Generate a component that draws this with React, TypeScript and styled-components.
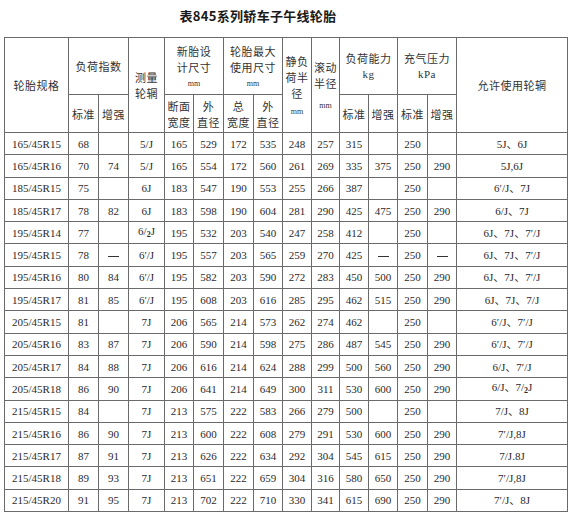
import React from 'react';
import styled, { createGlobalStyle } from 'styled-components';

const GlobalStyle = createGlobalStyle`
  html, body {
    margin: 0;
    padding: 0;
    background: #ffffff;
  }
`;

const Page = styled.div`
  width: 574px;
  height: 516px;
  overflow: hidden;
  background: #fff;
  font-family: "Liberation Serif", "Noto Sans CJK SC", serif;
  color: #2a2a2a;
`;

const Title = styled.div`
  height: 37px;
  box-sizing: border-box;
  padding: 0 58px 7px 0;
  display: flex;
  align-items: center;
  justify-content: center;
  font-family: "Noto Sans CJK SC", sans-serif;
  font-size: 13px;
  font-weight: 700;
  color: #1a1a1a;
  letter-spacing: 0.3px;
`;

const Table = styled.table`
  margin-left: 4px;
  width: 563px;
  border-collapse: collapse;
  table-layout: fixed;
  border: 1px solid #555;
`;

const HeadRow = styled.tr<{ $h: number }>`
  height: ${(p) => p.$h}px;
`;

const Th = styled.th`
  border: 1px solid #6a6a6a;
  padding: 0;
  font-family: "Noto Sans CJK SC", sans-serif;
  font-weight: 400;
  font-size: 11px;
  line-height: 16px;
  color: #333;
  text-align: center;
  vertical-align: middle;
  letter-spacing: 0.5px;
`;

const Unit = styled.span<{ $gap?: number }>`
  display: block;
  margin-top: ${(p) => p.$gap ?? 2}px;
  font-family: "Liberation Serif", serif;
  font-size: 8px;
  line-height: 10px;
  letter-spacing: 0;
`;

const UnitLatin = styled.span`
  display: block;
  font-family: "Liberation Serif", serif;
  font-size: 11px;
  line-height: 16px;
  letter-spacing: 0.5px;
`;

const Row = styled.tr`
  height: 22.3px;
`;

const Td = styled.td`
  border: 1px solid #6a6a6a;
  padding: 0;
  font-size: 11px;
  line-height: 14px;
  text-align: center;
  vertical-align: middle;
  white-space: nowrap;
  color: #2a2a2a;
`;

const Dash = styled.span`
  display: inline-block;
  width: 11px;
  height: 1.5px;
  background: #333;
  vertical-align: middle;
`;

const Sub = styled.span`
  font-size: 8px;
  font-weight: 700;
  vertical-align: -2px;
`;

const widths = [64, 30, 30, 36, 29, 30, 30, 29, 29, 28, 29, 29, 30, 29, 111];

type Row = string[];

const rows: Row[] = [
  ['165/45R15', '68', '', '5/J', '165', '529', '172', '535', '248', '257', '315', '', '250', '', '5J、6J'],
  ['165/45R16', '70', '74', '5/J', '165', '554', '172', '560', '261', '269', '335', '375', '250', '290', '5J,6J'],
  ['185/45R15', '75', '', '6J', '183', '547', '190', '553', '255', '266', '387', '', '250', '', '6\u2032/J、7J'],
  ['185/45R17', '78', '82', '6J', '183', '598', '190', '604', '281', '290', '425', '475', '250', '290', '6/J、7J'],
  ['195/45R14', '77', '', '6/_J', '195', '532', '203', '540', '247', '258', '412', '', '250', '', '6J、7J、7\u2032/J'],
  ['195/45R15', '78', '-', '6\u2032/J', '195', '557', '203', '565', '259', '270', '425', '-', '250', '-', '6J、7J、7\u2032/J'],
  ['195/45R16', '80', '84', '6\u2032/J', '195', '582', '203', '590', '272', '283', '450', '500', '250', '290', '6J、7J、7\u2032/J'],
  ['195/45R17', '81', '85', '6\u2032/J', '195', '608', '203', '616', '285', '295', '462', '515', '250', '290', '6J、7J、7/J'],
  ['205/45R15', '81', '', '7J', '206', '565', '214', '573', '262', '274', '462', '', '250', '', '6\u2032/J、7\u2032/J'],
  ['205/45R16', '83', '87', '7J', '206', '590', '214', '598', '275', '286', '487', '545', '250', '290', '6\u2032/J、7\u2032/J'],
  ['205/45R17', '84', '88', '7J', '206', '616', '214', '624', '288', '299', '500', '560', '250', '290', '6/J、7\u2032/J'],
  ['205/45R18', '86', '90', '7J', '206', '641', '214', '649', '300', '311', '530', '600', '250', '290', '6/J、7/_J'],
  ['215/45R15', '84', '', '7J', '213', '575', '222', '583', '266', '279', '500', '', '250', '', '7/J、8J'],
  ['215/45R16', '86', '90', '7J', '213', '600', '222', '608', '279', '291', '530', '600', '250', '290', '7\u2032/J,8J'],
  ['215/45R17', '87', '91', '7J', '213', '626', '222', '634', '292', '304', '545', '615', '250', '290', '7/J.8J'],
  ['215/45R18', '89', '93', '7J', '213', '651', '222', '659', '304', '316', '580', '650', '250', '290', '7\u2032/J,8J'],
  ['215/45R20', '91', '95', '7J', '213', '702', '222', '710', '330', '341', '615', '690', '250', '290', '7\u2032/J、8J'],
];

// "_" marks the small subscript 2 used in the source (6/₂J)
const renderCell = (v: string) => {
  if (v === '-') return <Dash />;
  if (v.includes('_')) {
    const parts = v.split('_');
    return (
      <>
        {parts[0]}
        <Sub>2</Sub>
        {parts[1]}
      </>
    );
  }
  return v;
};

const App: React.FC = () => {
  return (
    <Page>
      <GlobalStyle />
      <Title>表845系列轿车子午线轮胎</Title>
      <Table>
        <colgroup>
          {widths.map((w, i) => (
            <col key={i} style={{ width: w }} />
          ))}
        </colgroup>
        <thead>
          <HeadRow $h={57}>
            <Th rowSpan={2}>轮胎规格</Th>
            <Th colSpan={2}>负荷指数</Th>
            <Th rowSpan={2}>
              测量
              <br />
              轮辋
            </Th>
            <Th colSpan={2}>
              新胎设
              <br />
              计尺寸
              <Unit $gap={4}>mm</Unit>
            </Th>
            <Th colSpan={2}>
              轮胎最大
              <br />
              使用尺寸
              <Unit $gap={4}>mm</Unit>
            </Th>
            <Th rowSpan={2}>
              静负
              <br />
              荷半
              <br />
              径
              <Unit $gap={6}>mm</Unit>
            </Th>
            <Th rowSpan={2}>
              滚动
              <br />
              半径
              <Unit $gap={10}>mm</Unit>
            </Th>
            <Th colSpan={2}>
              负荷能力
              <UnitLatin>kg</UnitLatin>
            </Th>
            <Th colSpan={2}>
              充气压力
              <UnitLatin>kPa</UnitLatin>
            </Th>
            <Th rowSpan={2}>允许使用轮辋</Th>
          </HeadRow>
          <HeadRow $h={38}>
            <Th>标准</Th>
            <Th>增强</Th>
            <Th>
              断面
              <br />
              宽度
            </Th>
            <Th>
              外
              <br />
              直径
            </Th>
            <Th>
              总
              <br />
              宽度
            </Th>
            <Th>
              外
              <br />
              直径
            </Th>
            <Th>标准</Th>
            <Th>增强</Th>
            <Th>标准</Th>
            <Th>增强</Th>
          </HeadRow>
        </thead>
        <tbody>
          {rows.map((r) => (
            <Row key={r[0]}>
              {r.map((v, i) => (
                <Td key={i}>{renderCell(v)}</Td>
              ))}
            </Row>
          ))}
        </tbody>
      </Table>
    </Page>
  );
};

export default App;
